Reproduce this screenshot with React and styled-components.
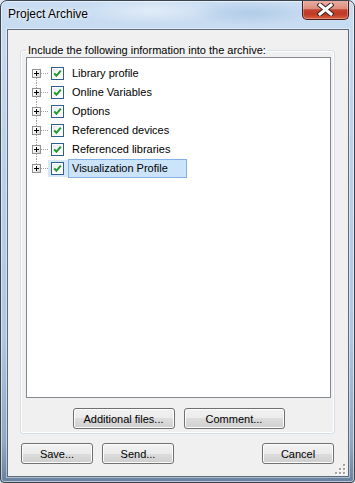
import React from 'react';
import styled, { createGlobalStyle } from 'styled-components';

const GlobalStyle = createGlobalStyle`
  html, body {
    margin: 0;
    padding: 0;
    background: #dce7f3;
  }
  body {
    font-family: "Liberation Sans", Arial, sans-serif;
  }
`;

const Window = styled.div`
  box-sizing: border-box;
  width: 355px;
  height: 483px;
  display: flex;
  flex-direction: column;
  padding: 0 5px 5px 6px;
  border: 1px solid #3b434d;
  border-radius: 7px 7px 4px 4px;
  overflow: hidden;
  background:
    radial-gradient(ellipse 70px 14px at 150px 10px, rgba(255, 255, 255, 0.45), rgba(255, 255, 255, 0)),
    radial-gradient(ellipse 60px 12px at 250px 12px, rgba(150, 185, 220, 0.45), rgba(150, 185, 220, 0)),
    linear-gradient(180deg, #c9ddf2 0%, #bbd2eb 30%, #aec7e3 70%, #8ea8c6 92%, #67819f 100%);
  box-shadow: inset 0 0 0 1px rgba(255, 255, 255, 0.55);
`;

const TitleBar = styled.div`
  height: 28px;
  flex-shrink: 0;
  display: flex;
  align-items: flex-start;
  justify-content: space-between;
`;

const TitleText = styled.div`
  margin: 6px 0 0 1px;
  font-size: 12px;
  line-height: 15px;
  color: #000;
  text-shadow: 0 0 6px rgba(255, 255, 255, 0.9), 0 0 3px rgba(255, 255, 255, 0.8);
`;

const CloseButton = styled.div`
  box-sizing: border-box;
  margin-top: -1px;
  width: 47px;
  height: 20px;
  display: flex;
  align-items: center;
  justify-content: center;
  border: 1px solid #4c1a14;
  border-top: none;
  border-radius: 0 0 5px 5px;
  background: linear-gradient(180deg, #eab1a6 0%, #dd8d7e 45%, #c44230 52%, #bf3a26 75%, #d8603e 100%);
  box-shadow: inset 0 0 0 1px rgba(255, 255, 255, 0.3);
`;

const Client = styled.div`
  position: relative;
  flex: 1;
  display: flex;
  flex-direction: column;
  gap: 9px;
  padding: 13px 13px 12px 12px;
  border: 1px solid #5d6a7a;
  background: #f0f0f0;
  box-shadow: 0 0 0 1px rgba(255, 255, 255, 0.45);
  min-height: 0;
`;

const Group = styled.fieldset`
  flex: 1;
  min-width: 0;
  min-height: 0;
  margin: 0;
  padding: 0 3px 4px 5px;
  display: flex;
  flex-direction: column;
  border: 1px solid #d5dfe5;
  border-radius: 3px;
  box-shadow: inset 0 0 0 1px #fff;
`;

const Legend = styled.legend`
  padding: 0 2px;
  font-size: 11px;
  line-height: 14px;
  color: #000;
`;

const TreeBox = styled.div`
  flex: 1;
  padding: 6px 0 0 5px;
  border: 1px solid #828790;
  background: #fff;
`;

const TreeRow = styled.div`
  height: 19px;
  display: flex;
  align-items: center;
`;

const ExpCell = styled.span`
  position: relative;
  width: 9px;
  height: 19px;
  display: flex;
  align-items: center;

  &::before,
  &::after {
    content: '';
    position: absolute;
    left: 4px;
    height: 5px;
    border-left: 1px dotted #a0a0a0;
  }
  &::before {
    top: 0;
    display: ${({ $first }) => ($first ? 'none' : 'block')};
  }
  &::after {
    top: 14px;
    display: ${({ $last }) => ($last ? 'none' : 'block')};
  }
`;

const Expander = styled.span`
  box-sizing: border-box;
  width: 9px;
  height: 9px;
  display: flex;
  border: 1px solid #919191;
  background: linear-gradient(135deg, #ffffff 30%, #d3d3d3 100%);
`;

const Connector = styled.span`
  width: 7px;
  height: 0;
  border-top: 1px dotted #a0a0a0;
`;

const Band = styled.span`
  height: 17px;
  display: flex;
  align-items: center;
  padding: 0 4px 0 3px;
  background: ${({ $selected }) => ($selected ? '#d7e8f9' : 'transparent')};
`;

const Check = styled.span`
  box-sizing: border-box;
  width: 13px;
  height: 13px;
  display: flex;
  border: 1px solid #2f5f91;
  background: linear-gradient(135deg, #e3e8ee 0%, #ffffff 70%);
  box-shadow: inset 0 0 0 1px #fff;
`;

const Label = styled.span`
  box-sizing: border-box;
  height: 19px;
  padding: 0 18px 0 3px;
  font-size: 11px;
  line-height: 17px;
  color: #000;
  white-space: nowrap;
  border: 1px solid ${({ $selected }) => ($selected ? '#84b2e6' : 'transparent')};
  background: ${({ $selected }) => ($selected ? '#cce4f9' : 'transparent')};
`;

const ButtonRow = styled.div`
  display: flex;
  gap: 9px;
  justify-content: ${({ $center }) => ($center ? 'center' : 'flex-start')};
  margin-top: ${({ $center }) => ($center ? '10px' : '0')};
  padding: ${({ $center }) => ($center ? '0' : '0 1px')};
`;

const Button = styled.button`
  box-sizing: border-box;
  width: ${({ $w }) => $w}px;
  height: 21px;
  margin: 0;
  margin-left: ${({ $push }) => ($push ? 'auto' : '0')};
  padding: 0;
  font-family: "Liberation Sans", Arial, sans-serif;
  font-size: 11px;
  color: #000;
  border: 1px solid #707070;
  border-radius: 3px;
  background: linear-gradient(180deg, #f2f2f2 0%, #ebebeb 50%, #dddddd 50%, #cfcfcf 100%);
  box-shadow: inset 0 0 0 1px #fcfcfc;
`;

const Grip = styled.svg`
  position: absolute;
  right: 2px;
  bottom: 1px;
`;

const items = [
  'Library profile',
  'Online Variables',
  'Options',
  'Referenced devices',
  'Referenced libraries',
  'Visualization Profile',
];

const PlusIcon = () => (
  <svg width="7" height="7" viewBox="0 0 7 7">
    <rect x="1" y="3" width="5" height="1" fill="#000" />
    <rect x="3" y="1" width="1" height="5" fill="#000" />
  </svg>
);

const CheckMark = () => (
  <svg width="11" height="11" viewBox="0 0 11 11">
    <path d="M2.2 5.4 L4.4 7.8 L8.8 2.6" fill="none" stroke="#1f9c2a" strokeWidth="2" />
  </svg>
);

const CloseGlyph = () => (
  <svg width="17" height="13" viewBox="0 0 17 13">
    <path d="M3 2 L14 11 M14 2 L3 11" stroke="#3a2420" strokeWidth="5" strokeLinecap="square" />
    <path d="M3 2 L14 11 M14 2 L3 11" stroke="#fff" strokeWidth="3" strokeLinecap="square" />
  </svg>
);

const dots = [[8, 8], [4, 8], [0, 8], [8, 4], [4, 4], [8, 0]];

export default function App() {
  return (
    <>
      <GlobalStyle />
      <Window>
        <TitleBar>
          <TitleText>Project Archive</TitleText>
          <CloseButton>
            <CloseGlyph />
          </CloseButton>
        </TitleBar>
        <Client>
          <Group>
            <Legend>Include the following information into the archive:</Legend>
            <TreeBox>
              {items.map((text, i) => {
                const selected = i === items.length - 1;
                return (
                  <TreeRow key={text}>
                    <ExpCell $first={i === 0} $last={i === items.length - 1}>
                      <Expander>
                        <PlusIcon />
                      </Expander>
                    </ExpCell>
                    <Connector />
                    <Band $selected={selected}>
                      <Check>
                        <CheckMark />
                      </Check>
                    </Band>
                    <Label $selected={selected}>{text}</Label>
                  </TreeRow>
                );
              })}
            </TreeBox>
            <ButtonRow $center>
              <Button $w={102}>Additional files...</Button>
              <Button $w={101}>Comment...</Button>
            </ButtonRow>
          </Group>
          <ButtonRow>
            <Button $w={72}>Save...</Button>
            <Button $w={72}>Send...</Button>
            <Button $w={72} $push>Cancel</Button>
          </ButtonRow>
          <Grip width="11" height="11" viewBox="0 0 11 11">
            {dots.map(([x, y]) => (
              <g key={`${x}-${y}`}>
                <rect x={x + 1} y={y + 1} width="2" height="2" fill="#fff" />
                <rect x={x} y={y} width="2" height="2" fill="#a3a3a3" />
              </g>
            ))}
          </Grip>
        </Client>
      </Window>
    </>
  );
}
